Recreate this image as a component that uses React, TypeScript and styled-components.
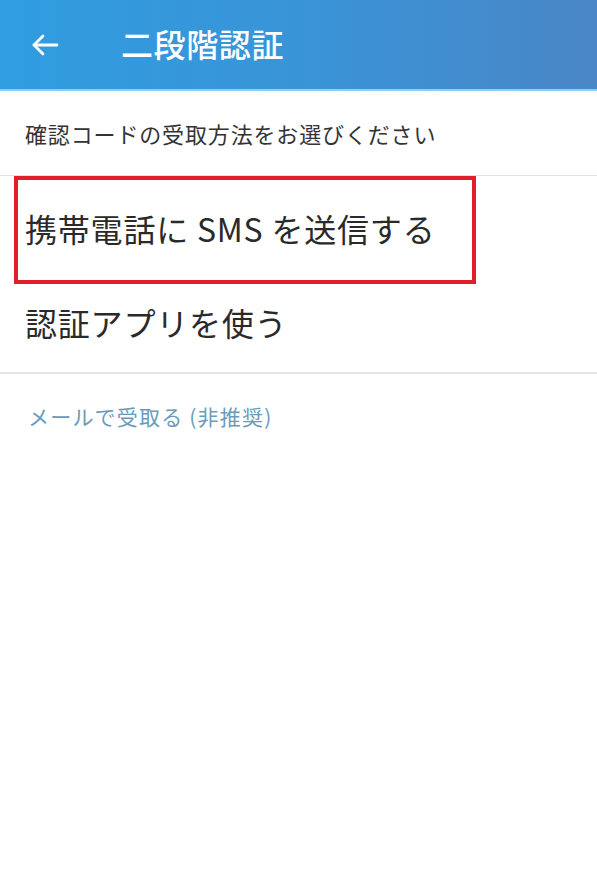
import styled, {createGlobalStyle} from "styled-components";

const GlobalStyle = createGlobalStyle`
    html, body {
        margin: 0;
        padding: 0;
        background: #ffffff;
    }
    body {
        font-family: "Noto Sans CJK JP", "Noto Sans", sans-serif;
    }
`;

const Screen = styled.div`
    width: 597px;
    min-height: 873px;
    background: #ffffff;
    display: flex;
    flex-direction: column;
`;

const Header = styled.header`
    height: 91px;
    display: flex;
    align-items: center;
    background: linear-gradient(90deg, #2f9de0 0%, #3a93d6 55%, #4a86c6 100%);
    border-bottom: 2px solid #8fd0f2;
    box-sizing: border-box;
`;

const BackButton = styled.button`
    width: 92px;
    height: 100%;
    padding: 0 0 0 31px;
    border: none;
    background: transparent;
    display: flex;
    align-items: center;
    cursor: pointer;
`;

const Title = styled.h1`
    margin: 0 0 3px 29px;
    font-size: 32px;
    font-weight: 500;
    color: #ffffff;
    letter-spacing: 0.6px;
`;

const Hint = styled.p`
    margin: 0;
    height: 84px;
    padding: 0 0 0 25px;
    display: flex;
    align-items: center;
    font-size: 22px;
    letter-spacing: 0.85px;
    color: #333333;
    border-bottom: 1px solid #e2e2e2;
`;

const OptionRow = styled.div<{ $height: number; $shift?: number }>`
    position: relative;
    height: ${p => p.$height}px;
    padding: 0 0 ${p => p.$shift ?? 0}px 25px;
    box-sizing: border-box;
    display: flex;
    align-items: center;
    font-size: 32px;
    letter-spacing: 0.8px;
    color: #2a2a2a;
    cursor: pointer;
`;

const Highlight = styled.span`
    position: absolute;
    left: 14px;
    top: 0;
    width: 462px;
    height: 108px;
    border: 4px solid #e01f2a;
    box-sizing: border-box;
    pointer-events: none;
`;

const Divider = styled.div`
    height: 2px;
    background: #e4e4e4;
`;

const MailLink = styled.a`
    margin: 27px 0 0 28px;
    font-size: 21px;
    letter-spacing: 1.2px;
    color: #6b9bbb;
    text-decoration: none;
    cursor: pointer;
`;

const ArrowIcon = () => (
    <svg width="28" height="24" viewBox="0 0 28 24" fill="none" stroke="#ffffff" strokeWidth="2.8" strokeLinecap="round" strokeLinejoin="round">
        <path d="M26 12H3" />
        <path d="M12 3L3 12l9 9" />
    </svg>
);

export default function App() {
    return (
        <>
            <GlobalStyle />
            <Screen>
                <Header>
                    <BackButton aria-label="戻る">
                        <ArrowIcon />
                    </BackButton>
                    <Title>二段階認証</Title>
                </Header>
                <Hint>確認コードの受取方法をお選びください</Hint>
                <OptionRow $height={104}>
                    携帯電話に SMS を送信する
                    <Highlight />
                </OptionRow>
                <OptionRow $height={92} $shift={8}>認証アプリを使う</OptionRow>
                <Divider />
                <MailLink>メールで受取る (非推奨)</MailLink>
            </Screen>
        </>
    );
}
